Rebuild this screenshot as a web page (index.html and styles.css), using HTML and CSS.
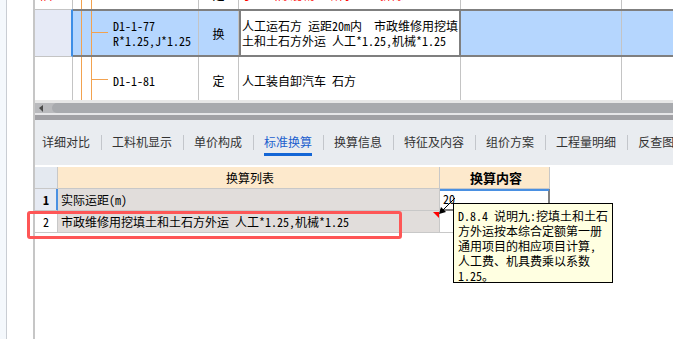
FILE: index.html
```html
<!DOCTYPE html>
<html lang="zh-CN">
<head>
    <meta charset="UTF-8">
    <title>标准换算</title>
    <link rel="stylesheet" href="styles.css">
</head>
<body>

<div class="app">
    <!-- Left tree strip -->
    <aside class="side">
        <div class="side-strip"></div>
    </aside>

    <main class="main">
        <!-- Quota grid (scrolled) -->
        <div class="grid">
            <div class="row row-cut">
                <div class="c0 red">队</div>
                <div class="cells">
                    <div class="c1 tree"><span class="code">D1-1-76</span></div>
                    <div class="c2">定</div>
                    <div class="c3 red">手工凿除混凝土结构 人工拆除</div>
                    <div class="c4"></div>
                    <div class="c5"></div>
                </div>
            </div>
            <div class="row row-sel">
                <div class="c0"></div>
                <div class="cells">
                    <div class="c1 tree branch"><span class="code">D1-1-77<br>R*1.25,J*1.25</span></div>
                    <div class="c2">换</div>
                    <div class="c3 name">人工运石方 运距20m内&nbsp; 市政维修用挖填<br>土和土石方外运 人工*1.25,机械*1.25</div>
                    <div class="c4"></div>
                    <div class="c5"></div>
                </div>
            </div>
            <div class="row">
                <div class="c0"></div>
                <div class="cells">
                    <div class="c1 tree branch"><span class="code">D1-1-81</span></div>
                    <div class="c2">定</div>
                    <div class="c3 name">人工装自卸汽车 石方</div>
                    <div class="c4"></div>
                    <div class="c5"></div>
                </div>
            </div>
        </div>

        <!-- Horizontal scrollbar + splitter -->
        <div class="hscroll">
            <span class="arrow-left"></span>
            <span class="thumb"></span>
        </div>
        <div class="split-gap"></div>
        <div class="splitter"></div>

        <!-- Tabs -->
        <nav class="tabs">
            <span class="tab">详细对比</span><i class="sep"></i>
            <span class="tab">工料机显示</span><i class="sep"></i>
            <span class="tab">单价构成</span><i class="sep"></i>
            <span class="tab active">标准换算</span><i class="sep"></i>
            <span class="tab">换算信息</span><i class="sep"></i>
            <span class="tab">特征及内容</span><i class="sep"></i>
            <span class="tab">组价方案</span><i class="sep"></i>
            <span class="tab">工程量明细</span><i class="sep"></i>
            <span class="tab">反查图形工程量</span>
        </nav>

        <!-- Conversion table -->
        <div class="panel">
            <div class="calc">
                <div class="cell rh head"></div>
                <div class="cell head center">换算列表</div>
                <div class="cell head center bold">换算内容</div>

                <div class="cell rh rh-cur bold">1</div>
                <div class="cell item">实际运距(m)</div>
                <div class="cell edit">20</div>

                <div class="cell rh rh-plain">2</div>
                <div class="cell item note">市政维修用挖填土和土石方外运 人工*1.25,机械*1.25</div>
                <div class="cell"></div>
            </div>
        </div>
    </main>

    <!-- Overlays: annotation box and comment tooltip -->
    <div class="mark"></div>
    <svg class="tip-arrow" width="24" height="22" viewBox="0 0 24 22">
        <line x1="19" y1="3" x2="7" y2="15" stroke="#000" stroke-width="1"/>
        <polygon points="3,19 5,12 10,17" fill="#000"/>
    </svg>
    <div class="tip">
        D.8.4 说明九:挖填土和土石<br>
        方外运按本综合定额第一册<br>
        通用项目的相应项目计算，<br>
        人工费、机具费乘以系数<br>
        1.25。
    </div>
</div>

</body>
</html>
```

FILE: styles.css
```css
/* General */
* {
    box-sizing: border-box;
}

body {
    margin: 0;
    font-family: "Noto Sans CJK SC", sans-serif;
    font-size: 12px;
    font-feature-settings: "hwid" 1;
    color: #000;
    background: #fff;
    overflow: hidden;
}

.app {
    position: relative;
    display: flex;
    width: 673px;
    height: 339px;
}

/* Left strip */
.side {
    width: 33px;
    flex-shrink: 0;
    background: #fff;
}

.side-strip {
    width: 7px;
    height: 100%;
    background: #f4f8fc;
    border-right: 1px solid #c9cdd3;
}

.main {
    flex: 1;
    min-width: 0;
    display: flex;
    flex-direction: column;
    border-left: 2px solid #c6c6c6;
}

/* Quota grid */
.grid {
    height: 100px;
    overflow: hidden;
    flex-shrink: 0;
}

.row {
    display: flex;
    height: 46px;
}

.row-cut {
    height: 9px;
}

.row-sel {
    height: 48px;
}

.c0 {
    width: 38px;
    flex-shrink: 0;
    border-right: 1px solid #c4c4c4;
    border-bottom: 1px solid #c4c4c4;
    padding-left: 5px;
}

.row-sel .c0 {
    background: #e6eaf6;
    border-top: 1px solid #c4c4c4;
    border-right: 2px solid #3d8ee6;
}

.cells {
    flex: 1;
    display: flex;
    min-width: 0;
}

.row-sel .cells {
    background: #b5d6fe;
    border-top: 2px solid #7f7f7f;
    border-bottom: 2px solid #7f7f7f;
}

.cells > div {
    display: flex;
    align-items: center;
    flex-shrink: 0;
    border-right: 1px solid #c4c4c4;
    line-height: 15px;
    white-space: nowrap;
}

.row-cut .c0,
.row-cut .cells > div {
    display: flex;
    align-items: flex-end;
    padding-bottom: 7px;
    border-bottom: none;
    line-height: 15px;
}

.c1 {
    width: 126px;
    padding-left: 40px;
}

.tree {
    background:
        linear-gradient(#f2a24f, #f2a24f) 8px 0 / 1px 100% no-repeat,
        linear-gradient(#f2a24f, #f2a24f) 18px 0 / 1px 100% no-repeat;
}

.tree.branch {
    background:
        linear-gradient(#f2a24f, #f2a24f) 8px 0 / 1px 100% no-repeat,
        linear-gradient(#f2a24f, #f2a24f) 18px 0 / 1px 100% no-repeat,
        linear-gradient(#f2a24f, #f2a24f) 19px 48% / 16px 1px no-repeat;
}

.c2 {
    width: 40px;
    justify-content: center;
}

.row-cut .c2 {
    justify-content: center;
}

.c3 {
    width: 222px;
    padding-left: 3px;
}

.row-sel .c3 {
    background: #fff;
    border-left: 2px solid #7f7f7f;
    border-right: 2px solid #7f7f7f !important;
    padding-left: 1px;
}

.c4 {
    width: 161px;
}

.cells > .c5 {
    flex: 1;
    border-right: none;
}

.red {
    color: #ff0000;
}

/* Scrollbar */
.hscroll {
    flex-shrink: 0;
    position: relative;
    height: 13px;
    border-top: 3px solid #e7e7e7;
    background: #b9babd;
    display: flex;
    align-items: center;
}

.arrow-left {
    width: 0;
    height: 0;
    margin-left: 4px;
    border-right: 4px solid #4a4a4a;
    border-top: 3px solid transparent;
    border-bottom: 4px solid transparent;
}

.thumb {
    flex: 1;
    height: 10px;
    margin-left: 9px;
    margin-right: -10px;
    border-radius: 5px;
    background: #a8aaae;
}

.split-gap {
    flex-shrink: 0;
    height: 2px;
    background: #e6e6e8;
}

.splitter {
    flex-shrink: 0;
    height: 5px;
    background: #a1a1a5;
}

/* Tabs */
.tabs {
    flex-shrink: 0;
    height: 45px;
    display: flex;
    align-items: flex-start;
    padding: 13px 0 0 7px;
    background: #e9ecf0;
    overflow: hidden;
    white-space: nowrap;
}

.tab {
    margin: 0 11px 0 10px;
    line-height: 17px;
    padding-bottom: 3px;
    border-bottom: 3px solid transparent;
    color: #333;
    flex-shrink: 0;
}

.tab:first-child {
    margin-left: 0;
}

.tab.active {
    color: #1b5fce;
    border-bottom-color: #1366d6;
}

.sep {
    width: 1px;
    height: 15px;
    margin-top: 2px;
    background: #c3c6cb;
    flex-shrink: 0;
}

/* Conversion table */
.panel {
    flex: 1;
    background: #fff;
    padding-top: 2px;
}

.calc {
    display: grid;
    grid-template-columns: 23px 382px 110px;
    grid-auto-rows: 22px;
    width: 515px;
}

.cell {
    display: flex;
    align-items: center;
    padding-left: 3px;
    border-right: 1px solid #c8c8c8;
    border-bottom: 1px solid #c8c8c8;
    white-space: nowrap;
    line-height: 15px;
}

.head {
    background: #fde9cc;
}

.cell.rh {
    justify-content: center;
    padding-left: 0;
    background: #fff;
}

.cell.rh.head {
    background: #e4e9f0;
}

.rh-cur {
    background: #e6eaf3 !important;
    border-right-color: #4a90e2;
    box-shadow: inset -1px 0 0 #4a90e2;
}

.center {
    justify-content: center;
}

.bold {
    font-weight: bold;
}

.head.bold {
    font-size: 13px;
}

.item {
    background: #e1dddb;
}

.note {
    position: relative;
}

.note::after {
    content: "";
    position: absolute;
    right: 0;
    top: 1px;
    border-top: 6px solid #ff0000;
    border-left: 6px solid transparent;
}

.edit {
    border-right-color: #808080;
    border-bottom-color: #808080;
    box-shadow: inset 0 2px 0 #4a90e2, inset -1px -1px 0 #808080;
    align-items: flex-start;
    padding-top: 2px;
}

/* Overlays */
.mark {
    position: absolute;
    left: 27px;
    top: 211px;
    width: 375px;
    height: 28px;
    border: 3px solid #fe5656;
    border-radius: 3px;
}

.tip-arrow {
    position: absolute;
    left: 436px;
    top: 195px;
}

.tip {
    position: absolute;
    left: 453px;
    top: 203px;
    width: 160px;
    height: 80px;
    padding: 4px 0 0 4px;
    background: #ffffe1;
    border: 1px solid #000;
    line-height: 15px;
    white-space: nowrap;
}
```
